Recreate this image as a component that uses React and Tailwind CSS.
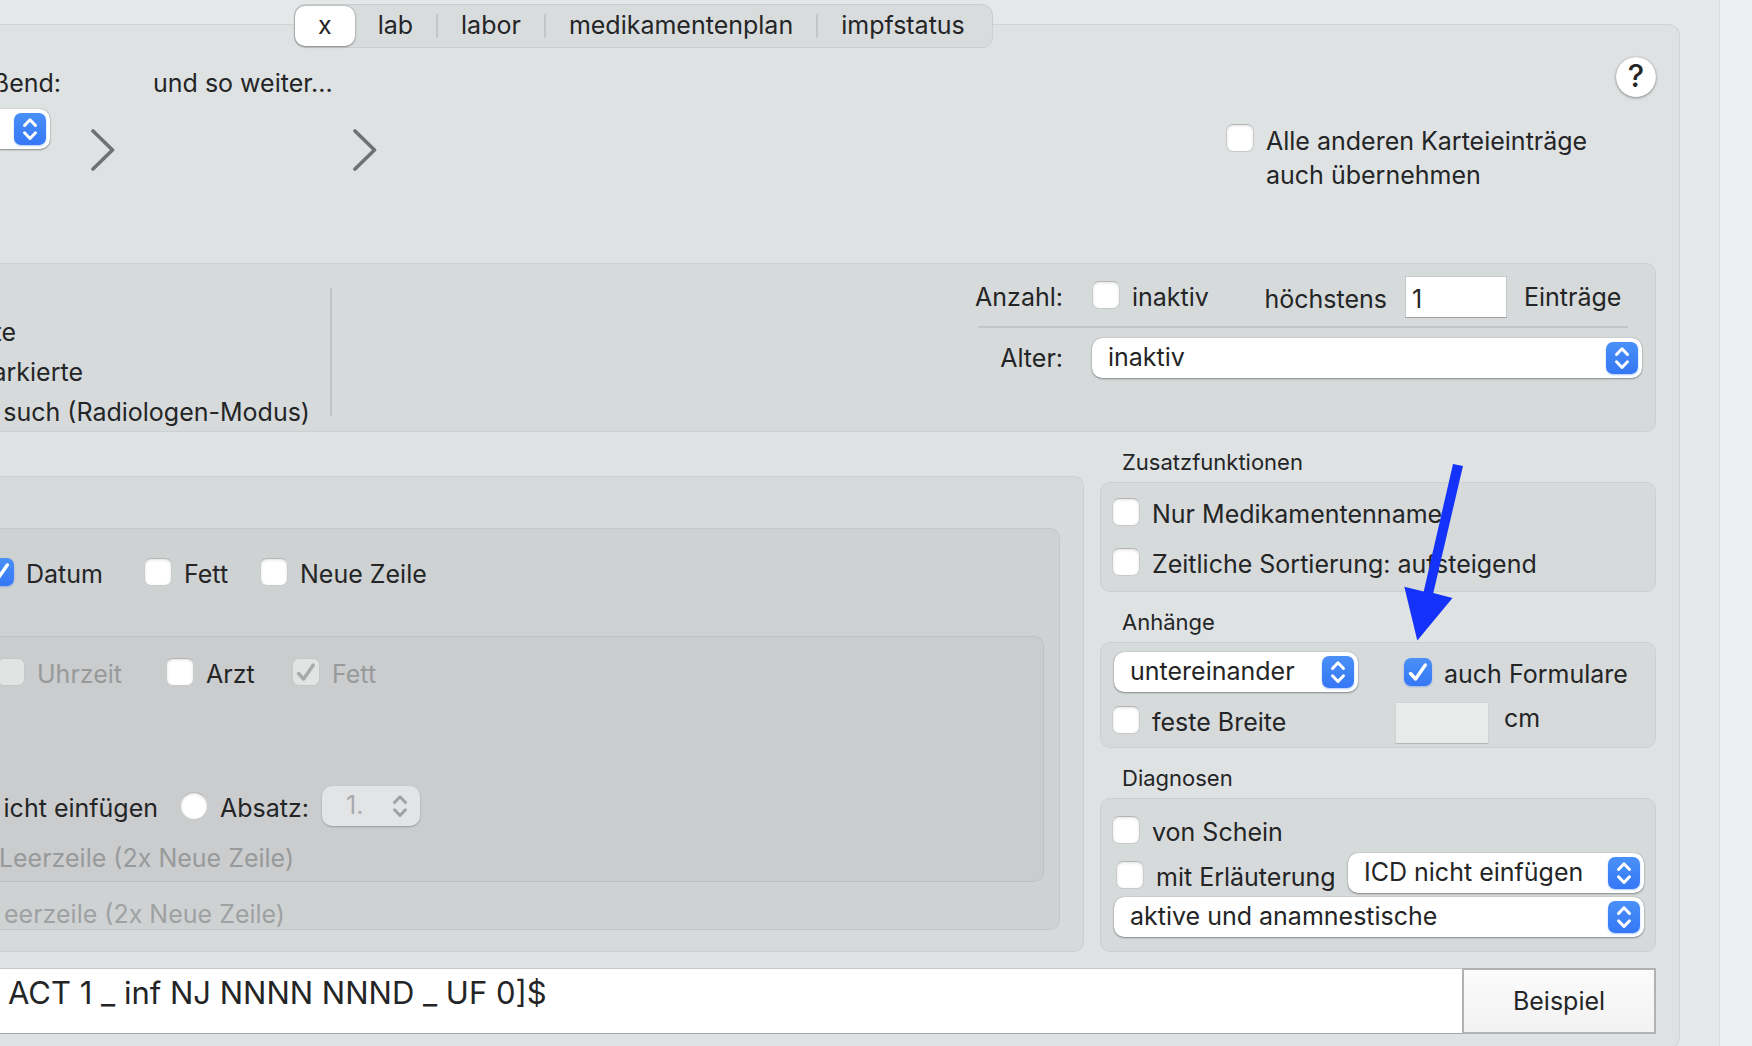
import React, { useState } from "react";
import clsx from "clsx";

const tabs = ["x", "lab", "labor", "medikamentenplan", "impfstatus"];

const CheckMark = ({ className }) => (
  <svg
    viewBox="0 0 28 28"
    fill="none"
    stroke="currentColor"
    strokeWidth="3.4"
    strokeLinecap="round"
    strokeLinejoin="round"
    className={clsx("pointer-events-none absolute inset-0 size-7", className)}
  >
    <path d="M6.5 15.5 L11.6 21 L21.3 7" />
  </svg>
);

const UpDown = () => (
  <svg
    viewBox="0 0 32 32"
    fill="none"
    stroke="currentColor"
    strokeWidth="3"
    strokeLinecap="round"
    strokeLinejoin="round"
    className="size-8"
  >
    <path d="M10.5 12.5 L16 6.8 L21.5 12.5" />
    <path d="M10.5 19.8 L16 25.5 L21.5 19.8" />
  </svg>
);

const Chevron = ({ className }) => (
  <svg
    viewBox="0 0 24 42"
    fill="none"
    stroke="#707173"
    strokeWidth="3.6"
    strokeLinecap="round"
    strokeLinejoin="round"
    className={clsx("h-[42px] w-6 shrink-0", className)}
  >
    <path d="M2 2 L21.5 21 L2 40" />
  </svg>
);

// Checkbox oder Radio mit Beschriftung
const Check = ({ label, type = "checkbox", checked, disabled, wide, className }) => {
  const [on, setOn] = useState(!!checked);
  return (
    <label className={clsx("flex items-start gap-3 whitespace-nowrap", className)}>
      <span className="relative size-7 shrink-0">
        <input
          type={type}
          checked={on}
          disabled={disabled}
          onChange={(e) => setOn(e.target.checked)}
          className={clsx(
            "block size-7 appearance-none",
            type === "radio" ? "rounded-full" : "rounded-[7px]",
            disabled && "border border-[#c6c8c8] bg-[#e2e4e4]",
            !disabled && on && "bg-linear-to-b from-[#4a90f8] to-[#3577f5] shadow-[0_1px_2px_rgba(53,119,245,0.4)]",
            !disabled && !on && "border border-[#c9cbcb] border-t-[#b4b6b6] bg-white shadow-[inset_0_1px_3px_rgba(0,0,0,0.12)]"
          )}
        />
        {on && <CheckMark className={disabled ? "text-[#a9abab]" : "text-white"} />}
      </span>
      <span
        className={clsx(
          wide ? "leading-[34px]" : "leading-8",
          disabled && "text-[#989a9a]"
        )}
      >
        {label}
      </span>
    </label>
  );
};

const Popup = ({ value, name, disabled, className }) => (
  <span className={clsx("relative block h-10", className)}>
    <select
      aria-label={name}
      disabled={disabled}
      className={clsx(
        "block h-10 w-full appearance-none rounded-[10px] pb-0.5 outline-none",
        disabled
          ? "bg-[#e3e4e6] pl-6 text-[#a9aaac] opacity-100 shadow-[0_1px_2px_rgba(0,0,0,0.25)]"
          : "bg-white pl-4 shadow-[0_0_1px_rgba(0,0,0,0.4),0_1px_2px_rgba(0,0,0,0.35)]"
      )}
    >
      <option>{value}</option>
    </select>
    <span
      className={clsx(
        "pointer-events-none absolute top-1 right-1 rounded-[7px]",
        disabled
          ? "text-[#a0a1a3]"
          : "bg-linear-to-b from-[#4a90f8] to-[#3577f5] text-white shadow-[0_1px_2px_rgba(53,119,245,0.4)]"
      )}
    >
      <UpDown />
    </span>
  </span>
);

const Section = ({ title, className, children }) => (
  <section aria-label={title}>
    <h2 className="mt-[17px] mb-[7px] ml-[22px] text-[22px] leading-[26px]">{title}</h2>
    <div
      className={clsx(
        "rounded-[10px] border border-[#cdd0d1] bg-[#d7dadb] pr-[11px] pl-[11px]",
        className
      )}
    >
      {children}
    </div>
  </section>
);

const TabBar = () => {
  const [active, setActive] = useState("x");
  return (
    <div
      role="tablist"
      className="relative z-10 mt-1 ml-[294px] flex h-11 w-fit items-center rounded-[11px] border border-[#cbcecf] bg-[#d9dcdd] pr-1"
    >
      {tabs.map((tab, i) => (
        <React.Fragment key={tab}>
          {i > 1 && <span className="h-6 w-0.5 bg-[#c4c7c8]" />}
          <button
            role="tab"
            aria-selected={tab === active}
            onClick={() => setActive(tab)}
            className={clsx(
              "h-10 rounded-[10px] px-[23px] pb-0.5",
              tab === active &&
                "bg-white shadow-[0_0_2px_rgba(0,0,0,0.35),0_1px_2px_rgba(0,0,0,0.3)]"
            )}
          >
            {tab}
          </button>
        </React.Fragment>
      ))}
    </div>
  );
};

const Header = () => (
  <div className="flex h-[238px] items-start justify-between">
    <div className="pt-[43px]">
      <div className="flex">
        <span className="flex w-[61px] justify-end">ßend:</span>
        <span className="ml-[92px]">und so weiter...</span>
      </div>
      <div className="mt-[11px] flex items-start">
        <Popup name="anschließend" value="" className="-ml-5 w-[70px] shrink-0" />
        <Chevron className="mt-5 ml-[41px]" />
        <Chevron className="mt-5 ml-[238px]" />
      </div>
    </div>
    <div className="flex w-[430px] flex-col">
      <button
        aria-label="Hilfe"
        className="mt-8 size-10 self-end rounded-full bg-white pb-0.5 text-[31px] leading-[38px] font-medium shadow-[0_0_1px_rgba(0,0,0,0.4),0_1px_3px_rgba(0,0,0,0.35)]"
      >
        ?
      </button>
      <Check
        wide
        className="mt-[27px]"
        label={
          <>
            Alle anderen Karteieinträge
            <br />
            auch übernehmen
          </>
        }
      />
    </div>
  </div>
);

const Filter = () => (
  <div className="flex h-[169px] items-start justify-between rounded-r-[10px] border-y border-r border-[#cdd0d1] bg-[#d7dadb]">
    <div className="flex">
      <ul className="w-[310px] pt-12 leading-10 whitespace-nowrap">
        <li className="flex w-4 justify-end">te</li>
        <li className="flex w-[83px] justify-end">arkierte</li>
        <li className="flex justify-end">such (Radiologen-Modus)</li>
      </ul>
      <span className="mt-6 ml-5 h-32 w-0.5 bg-[#c2c5c6]" />
    </div>
    <div className="mr-[13px] w-[667px] pt-3">
      <div className="flex h-[42px] items-center">
        <span className="w-[88px] text-right">Anzahl:</span>
        <Check label="inaktiv" className="ml-[29px]" />
        <label className="ml-auto flex items-baseline gap-[18px]">
          höchstens
          <input
            type="text"
            defaultValue="1"
            className="h-[42px] w-[102px] border border-[#c5c8c9] border-b-[#9fa1a2] bg-white px-1.5 pt-1 outline-none"
          />
        </label>
        <span className="ml-[17px] w-[118px]">Einträge</span>
      </div>
      <hr className="mt-2 mr-[14px] ml-[3px] h-0.5 border-0 bg-[#c2c5c6]" />
      <div className="mt-[10px] flex items-center">
        <span className="mr-[29px] w-[88px] text-right">Alter:</span>
        <Popup name="Alter" value="inaktiv" className="flex-1" />
      </div>
    </div>
  </div>
);

const Format = () => (
  <div className="mt-11 flex-1 rounded-r-[10px] border-y border-r border-[#cdd0d1] bg-[#d7dadb] pt-[51px] pr-[23px]">
    <div className="rounded-r-[10px] border-y border-r border-[#c5c8c9] bg-[#cfd2d3] pt-[29px] pr-[15px]">
      <div className="-ml-[14px] grid grid-cols-[158px_116px_auto]">
        <Check label="Datum" checked />
        <Check label="Fett" />
        <Check label="Neue Zeile" />
      </div>
      <div className="mt-[46px] rounded-r-[10px] border-y border-r border-[#bfc1c2] bg-[#cbccce] pt-[21px] pb-2">
        <div className="-ml-[3px] grid grid-cols-[169px_126px_auto]">
          <Check label="Uhrzeit" disabled />
          <Check label="Arzt" />
          <Check label="Fett" checked disabled />
        </div>
        <div className="mt-24 flex items-center whitespace-nowrap">
          <span className="flex w-[158px] justify-end pt-1">icht einfügen</span>
          <Check type="radio" label="Absatz:" className="ml-[22px] w-[142px] pt-1" />
          <Popup name="Absatz" value="1." disabled className="w-[98px]" />
        </div>
        <p className="mt-[17px] flex w-[294px] justify-end whitespace-nowrap text-[#989a9a]">
          Leerzeile (2x Neue Zeile)
        </p>
      </div>
      <p className="mt-[17px] flex w-[285px] justify-end whitespace-nowrap text-[#9fa1a2]">
        eerzeile (2x Neue Zeile)
      </p>
    </div>
  </div>
);

const Options = () => (
  <div className="relative w-[556px] shrink-0">
    <Section title="Zusatzfunktionen" className="flex flex-col gap-[18px] pt-[15px] pb-[11px]">
      <Check label="Nur Medikamentenname" />
      <Check label="Zeitliche Sortierung: aufsteigend" />
    </Section>

    <Section title="Anhänge" className="flex pt-[9px] pb-[3px]">
      <div className="w-[246px]">
        <Popup name="Anordnung" value="untereinander" className="ml-0.5" />
        <Check label="feste Breite" className="mt-[14px]" />
      </div>
      <div className="ml-[37px] pt-1.5">
        <Check label="auch Formulare" checked className="ml-[9px]" />
        <label className="mt-3 flex items-start gap-[15px] leading-8">
          <input
            type="text"
            disabled
            className="h-[42px] w-[94px] border border-[#d0d3d3] border-b-[#b5b7b8] bg-[#e9ebeb]"
          />
          cm
        </label>
      </div>
    </Section>

    <Section title="Diagnosen" className="pt-[17px] pb-[14px]">
      <Check label="von Schein" />
      <div className="mt-[5px] flex items-end justify-between">
        <Check label="mit Erläuterung" className="ml-1" />
        <Popup name="ICD" value="ICD nicht einfügen" className="w-[296px]" />
      </div>
      <Popup name="Diagnosen" value="aktive und anamnestische" className="mt-1 ml-0.5" />
    </Section>

    {/* Hinweispfeil auf "auch Formulare" */}
    <svg
      viewBox="0 0 60 177"
      className="pointer-events-none absolute top-8 left-[304px] h-[177px] w-[60px]"
      fill="#1432fa"
    >
      <path d="M49 0 L59 2 L29.300 129 L48.500 134 L13.300 176.500 L0.300 122.700 L19.700 127.500 Z" />
    </svg>
  </div>
);

const App = () => {
  return (
    <div className="flex h-screen overflow-hidden bg-[#eeeff1] font-['Inter',sans-serif] text-[25px] leading-[30px] text-[#242526]">
      <main className="mr-8 h-fit min-h-full flex-1 border-r border-[#d9dcdd] bg-[#e4e8e9] pr-[39px]">
        <TabBar />
        <div className="-mt-6 rounded-r-[12px] border-y border-r border-[#d0d4d4] bg-[#dee2e3] pr-[23px] pb-[14px]">
          <Header />
          <Filter />
          <div className="flex gap-4">
            <Format />
            <Options />
          </div>
          <div className="mt-4 flex h-[66px]">
            <textarea
              aria-label="Platzhalter"
              defaultValue="ACT 1 _ inf NJ NNNN NNND _ UF 0]$"
              className="h-full flex-1 resize-none overflow-hidden border-y border-t-[#c5c8c9] border-b-[#a5a7a8] bg-white pt-1 pl-2 text-[31px] leading-10 outline-none"
            />
            <button className="w-[194px] border-2 border-[#b1b2b3] bg-linear-to-b from-[#fbfbfb] to-[#f2f2f2]">
              Beispiel
            </button>
          </div>
        </div>
      </main>
    </div>
  );
};

export default App;
